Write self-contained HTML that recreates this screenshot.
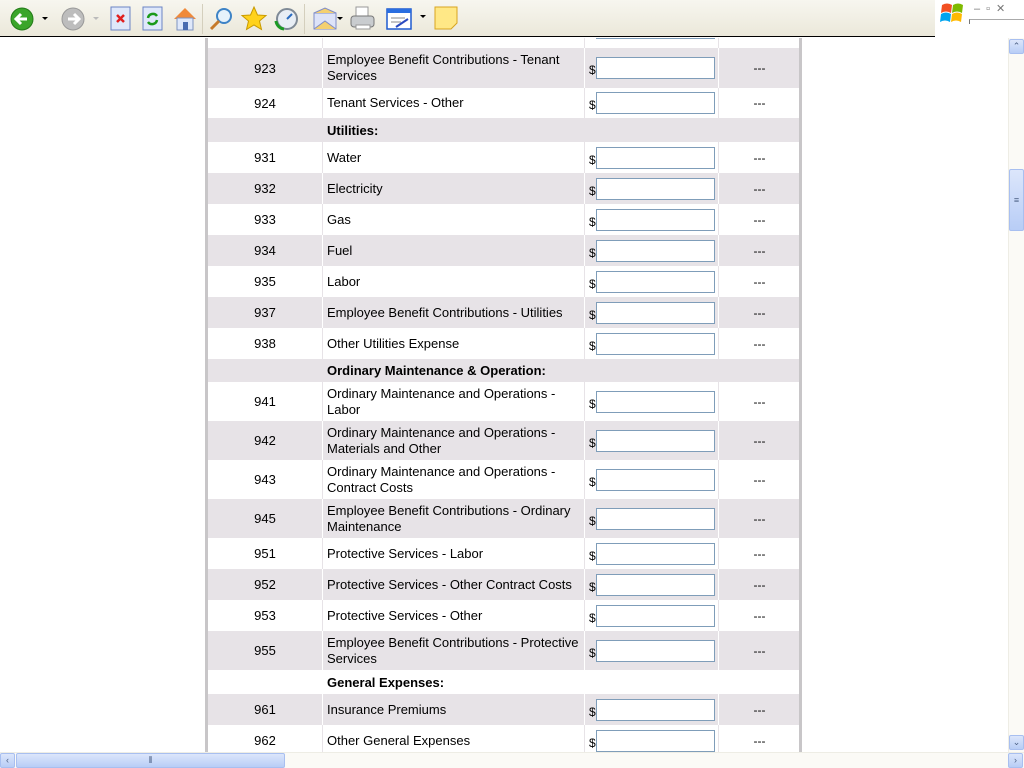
<!DOCTYPE html>
<html><head><meta charset="utf-8"><style>
*{margin:0;padding:0;box-sizing:border-box}
body{width:1024px;height:768px;overflow:hidden;background:#fff;font-family:"Liberation Sans",Tahoma,sans-serif;font-size:13px;color:#000;position:relative}
#tb{position:absolute;left:0;top:0;width:935px;height:37px;background:linear-gradient(#f7f6ef,#ebe8da);border-bottom:1px solid #000}
#tb svg{position:absolute}
.sep{position:absolute;top:4px;width:1px;height:30px;background:#d4cfbd}
.wrap{position:absolute;left:205px;top:38px;width:597px;height:714px;background:#fff;border-left:3px solid #c8c6c8;border-right:3px solid #c8c6c8;overflow:hidden}
.r{position:absolute;left:0;width:591px}
.g{background:#e7e3e7}
.c{position:absolute;top:0;height:100%;display:flex;align-items:center}
.n{left:0;width:115px;justify-content:center;border-right:1px solid #e7e3e7}
.d{left:116px;width:261px;padding-left:3px;padding-right:2px;line-height:16px;border-right:1px solid #e7e3e7}
.g .n,.g .d,.g .i{border-color:#fff}
.i{left:378px;width:133px;padding-left:3px;border-right:1px solid #e7e3e7}
.i span{margin-top:4px;font-size:12px}
.i b{display:block;width:119px;height:22px;border:1px solid #7f9db9;background:#fff;font-weight:normal}
.x{left:512px;width:79px;justify-content:center;font-size:12px}
.h{font-weight:bold;position:absolute;left:119px;top:0;height:100%;display:flex;align-items:center}
#vs{position:absolute;left:1008px;top:38px;width:16px;height:714px;background:#fbfaf6;border-left:1px solid #eeede5}
#hs{position:absolute;left:0;top:752px;width:1024px;height:16px;background:#fbfaf6;border-top:1px solid #eeede5}
.btn{position:absolute;width:15px;height:15px;background:linear-gradient(#dce6fb,#b8cdf6);border:1px solid #a8bff0;border-radius:2px;color:#4d6185;font-size:9px;text-align:center;line-height:13px}
</style></head><body>
<div id="tb">
<svg width="30" height="30" style="left:8px;top:4px" viewBox="0 0 30 30"><circle cx="14" cy="15" r="11" fill="#3aa52a" stroke="#237a18"/><path d="M19 15H9M13 10l-5 5 5 5" stroke="#fff" stroke-width="3" fill="none"/></svg>
<div style="position:absolute;left:42px;top:17px;border:3px solid transparent;border-top:3px solid #000"></div>
<svg width="30" height="30" style="left:59px;top:4px" viewBox="0 0 30 30"><circle cx="14" cy="15" r="11" fill="#bdbdbd" stroke="#999"/><path d="M9 15h10M15 10l5 5-5 5" stroke="#fff" stroke-width="3" fill="none"/></svg>
<div style="position:absolute;left:93px;top:17px;border:3px solid transparent;border-top:3px solid #bbb"></div>
<svg width="22" height="26" style="left:110px;top:6px"><rect x="1" y="1" width="19" height="23" fill="#dfe8fa" stroke="#6b84c4"/><path d="M7 9l7 7M14 9l-7 7" stroke="#e02020" stroke-width="2.5"/></svg>
<svg width="22" height="26" style="left:142px;top:6px"><rect x="1" y="1" width="19" height="23" fill="#dfe8fa" stroke="#6b84c4"/><path d="M6 12a5 5 0 0 1 9-2M15 14a5 5 0 0 1-9 2" stroke="#1a9a1a" stroke-width="2.5" fill="none"/></svg>
<svg width="28" height="28" style="left:171px;top:5px"><path d="M3 14L14 3l11 11" fill="#f08a3a"/><rect x="6" y="13" width="16" height="12" fill="#dfe8fa" stroke="#7e93c0"/><rect x="12" y="17" width="5" height="8" fill="#4a6cb0"/></svg>
<div class="sep" style="left:202px"></div>
<svg width="28" height="28" style="left:208px;top:5px"><circle cx="16" cy="11" r="7" fill="#e6f2fb" stroke="#3d83c6" stroke-width="2"/><path d="M11 16l-8 8" stroke="#c67a2a" stroke-width="3"/></svg>
<svg width="30" height="28" style="left:240px;top:5px"><path d="M14 2l3.5 8 8.5 .5-6.5 5.5 2 8.5-7.5-4.5-7.5 4.5 2-8.5L2 10.5l8.5-.5z" fill="#ffd21c" stroke="#c89a00"/></svg>
<svg width="28" height="28" style="left:272px;top:5px"><circle cx="15" cy="14" r="10" fill="#e8eef5" stroke="#7f8a96" stroke-width="2"/><path d="M15 14l5-5" stroke="#2a6cc0" stroke-width="2"/><path d="M4 16a9 9 0 0 0 8 8" stroke="#1c9a24" stroke-width="3" fill="none"/></svg>
<div class="sep" style="left:304px"></div>
<svg width="28" height="26" style="left:312px;top:6px"><rect x="2" y="7" width="22" height="16" fill="#dde3f8" stroke="#7f8cc8"/><path d="M2 7l11 -5 11 5M2 23l11-8 11 8" stroke="#7f8cc8" fill="#f4d070"/></svg>
<div style="position:absolute;left:337px;top:17px;border:3px solid transparent;border-top:3px solid #000"></div>
<svg width="30" height="28" style="left:348px;top:5px"><rect x="8" y="2" width="12" height="10" fill="#fff" stroke="#999"/><rect x="3" y="11" width="23" height="11" rx="3" fill="#c9cccf" stroke="#777"/><rect x="8" y="20" width="14" height="4" fill="#fff" stroke="#999"/></svg>
<svg width="30" height="24" style="left:386px;top:8px"><rect x="1" y="1" width="24" height="20" fill="#fff" stroke="#1f5bd0" stroke-width="1.5"/><rect x="1" y="1" width="24" height="4" fill="#2a6ee0"/><path d="M5 10h14M5 14h10" stroke="#888"/><path d="M10 19l12-8" stroke="#2a4ac0" stroke-width="2"/></svg>
<div style="position:absolute;left:420px;top:15px;border:3px solid transparent;border-top:3px solid #000"></div>
<svg width="26" height="26" style="left:434px;top:6px"><path d="M1 1h22v16l-6 6H1z" fill="#ffe886" stroke="#d8a520"/></svg>
</div>
<svg width="26" height="26" style="position:absolute;left:940px;top:1px"><path d="M2 4q5-3 10 0l-1 8q-5-3-10 0z" fill="#f25022"/><path d="M13 4q5-3 10 0l-1 8q-5-3-10 0z" fill="#7fba00"/><path d="M1 13q5-3 10 0l-1 8q-5-3-10 0z" fill="#00a4ef"/><path d="M12 13q5-3 10 0l-1 8q-5-3-10 0z" fill="#ffb900"/></svg>
<div style="position:absolute;left:974px;top:2px;color:#777;font-size:11px;letter-spacing:6px">–▫✕</div>
<div style="position:absolute;left:969px;top:19px;width:55px;height:5px;border-top:1px solid #aaa;border-left:1px solid #777"></div>

<div class="wrap">
<div class="r" style="top:-30px;height:40px"><div class="c n"></div><div class="c d"></div><div class="c i"><span>$</span><b></b></div><div class="c x"></div></div>
<div class="r g" style="top:10px;height:40px"><div class="c n">923</div><div class="c d">Employee Benefit Contributions - Tenant Services</div><div class="c i"><span>$</span><b></b></div><div class="c x">---</div></div>
<div class="r" style="top:50px;height:30px"><div class="c n">924</div><div class="c d">Tenant Services - Other</div><div class="c i"><span>$</span><b></b></div><div class="c x">---</div></div>
<div class="r g" style="top:80px;height:24px"><div class="h">Utilities:</div></div>
<div class="r" style="top:104px;height:31px"><div class="c n">931</div><div class="c d">Water</div><div class="c i"><span>$</span><b></b></div><div class="c x">---</div></div>
<div class="r g" style="top:135px;height:31px"><div class="c n">932</div><div class="c d">Electricity</div><div class="c i"><span>$</span><b></b></div><div class="c x">---</div></div>
<div class="r" style="top:166px;height:31px"><div class="c n">933</div><div class="c d">Gas</div><div class="c i"><span>$</span><b></b></div><div class="c x">---</div></div>
<div class="r g" style="top:197px;height:31px"><div class="c n">934</div><div class="c d">Fuel</div><div class="c i"><span>$</span><b></b></div><div class="c x">---</div></div>
<div class="r" style="top:228px;height:31px"><div class="c n">935</div><div class="c d">Labor</div><div class="c i"><span>$</span><b></b></div><div class="c x">---</div></div>
<div class="r g" style="top:259px;height:31px"><div class="c n">937</div><div class="c d">Employee Benefit Contributions - Utilities</div><div class="c i"><span>$</span><b></b></div><div class="c x">---</div></div>
<div class="r" style="top:290px;height:31px"><div class="c n">938</div><div class="c d">Other Utilities Expense</div><div class="c i"><span>$</span><b></b></div><div class="c x">---</div></div>
<div class="r g" style="top:321px;height:23px"><div class="h">Ordinary Maintenance &amp; Operation:</div></div>
<div class="r" style="top:344px;height:39px"><div class="c n">941</div><div class="c d">Ordinary Maintenance and Operations - Labor</div><div class="c i"><span>$</span><b></b></div><div class="c x">---</div></div>
<div class="r g" style="top:383px;height:39px"><div class="c n">942</div><div class="c d">Ordinary Maintenance and Operations - Materials and Other</div><div class="c i"><span>$</span><b></b></div><div class="c x">---</div></div>
<div class="r" style="top:422px;height:39px"><div class="c n">943</div><div class="c d">Ordinary Maintenance and Operations - Contract Costs</div><div class="c i"><span>$</span><b></b></div><div class="c x">---</div></div>
<div class="r g" style="top:461px;height:39px"><div class="c n">945</div><div class="c d">Employee Benefit Contributions - Ordinary Maintenance</div><div class="c i"><span>$</span><b></b></div><div class="c x">---</div></div>
<div class="r" style="top:500px;height:31px"><div class="c n">951</div><div class="c d">Protective Services - Labor</div><div class="c i"><span>$</span><b></b></div><div class="c x">---</div></div>
<div class="r g" style="top:531px;height:31px"><div class="c n">952</div><div class="c d">Protective Services - Other Contract Costs</div><div class="c i"><span>$</span><b></b></div><div class="c x">---</div></div>
<div class="r" style="top:562px;height:31px"><div class="c n">953</div><div class="c d">Protective Services - Other</div><div class="c i"><span>$</span><b></b></div><div class="c x">---</div></div>
<div class="r g" style="top:593px;height:39px"><div class="c n">955</div><div class="c d">Employee Benefit Contributions - Protective Services</div><div class="c i"><span>$</span><b></b></div><div class="c x">---</div></div>
<div class="r" style="top:632px;height:24px"><div class="h">General Expenses:</div></div>
<div class="r g" style="top:656px;height:31px"><div class="c n">961</div><div class="c d">Insurance Premiums</div><div class="c i"><span>$</span><b></b></div><div class="c x">---</div></div>
<div class="r" style="top:687px;height:31px"><div class="c n">962</div><div class="c d">Other General Expenses</div><div class="c i"><span>$</span><b></b></div><div class="c x">---</div></div>
</div>

<div id="vs">
<div class="btn" style="left:0;top:1px">⌃</div>
<div class="btn" style="left:0;top:131px;height:62px;line-height:60px">≡</div>
<div class="btn" style="left:0;top:697px">⌄</div>
</div>
<div id="hs">
<div class="btn" style="left:0;top:0">‹</div>
<div class="btn" style="left:16px;top:0;width:269px">⦀</div>
<div class="btn" style="left:1008px;top:0">›</div>
</div>
</body></html>
